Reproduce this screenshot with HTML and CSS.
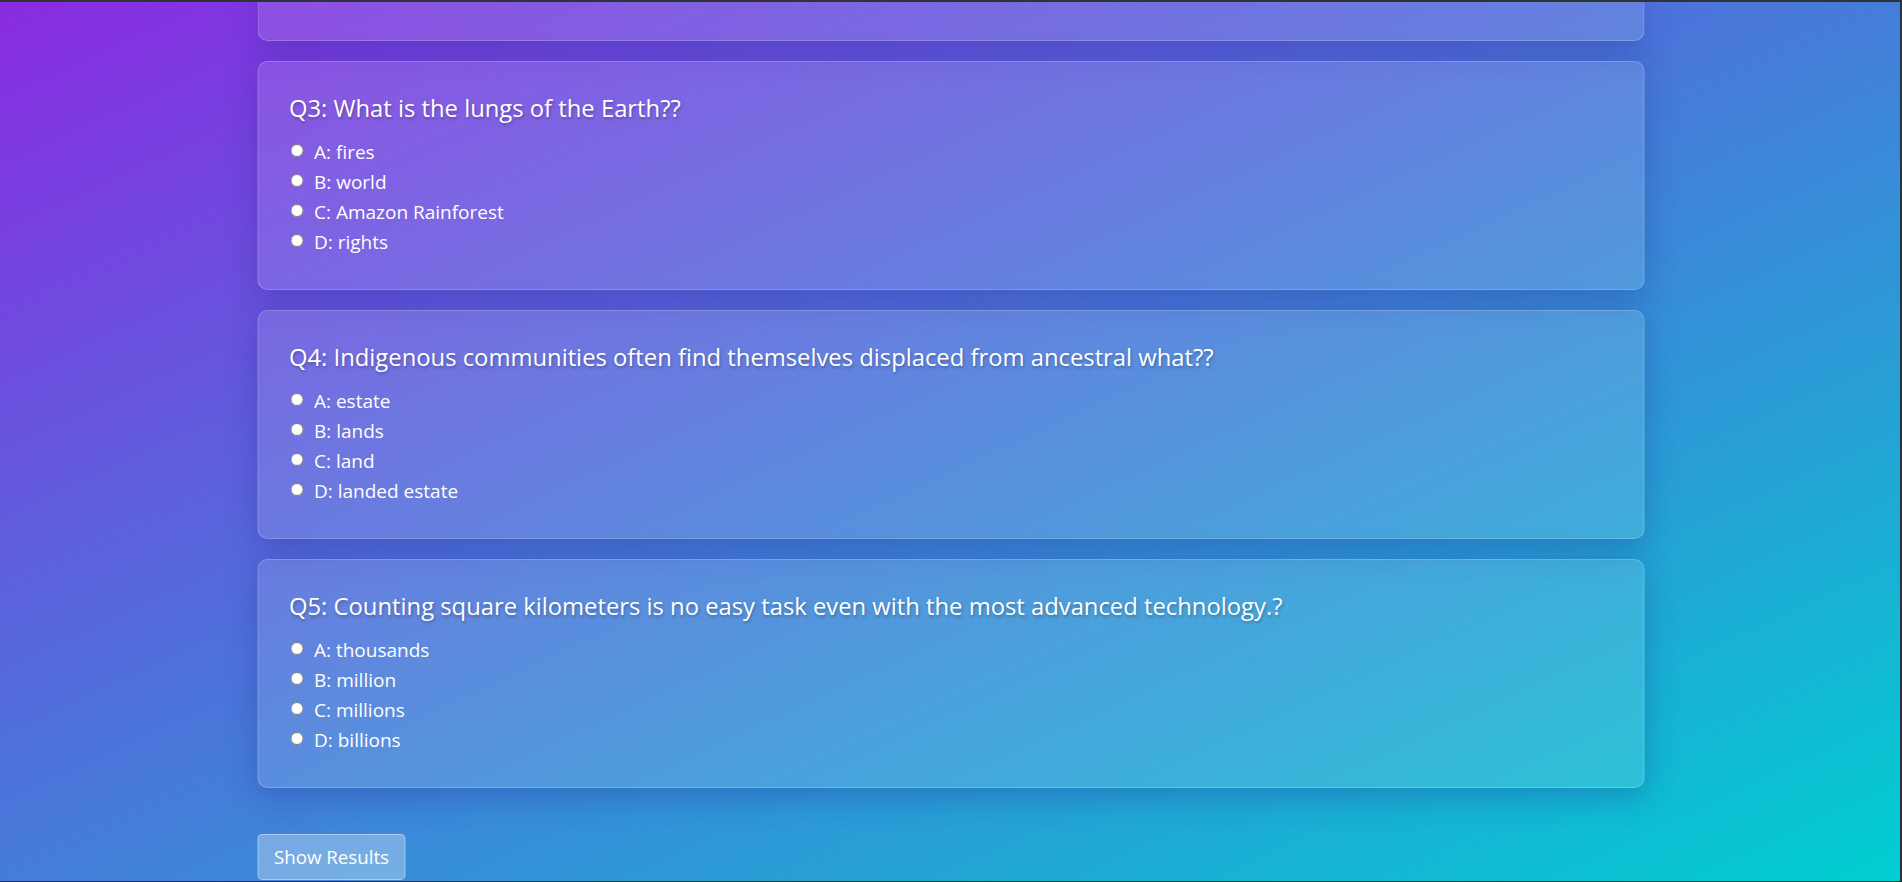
FILE: index.html
```html
<!DOCTYPE html>
<html lang="en">
<head>
<meta charset="utf-8">
<title>Quiz</title>
<link rel="stylesheet" href="styles.css">
</head>
<body>
<div class="viewport">
  <div class="quiz">
    <div class="card card-stub"></div>

    <div class="card">
      <h3 class="question">Q3: What is the lungs of the Earth??</h3>
      <label class="option"><input type="radio" name="q3"><span>A: fires</span></label>
      <label class="option"><input type="radio" name="q3"><span>B: world</span></label>
      <label class="option"><input type="radio" name="q3"><span>C: Amazon Rainforest</span></label>
      <label class="option"><input type="radio" name="q3"><span>D: rights</span></label>
    </div>

    <div class="card">
      <h3 class="question">Q4: Indigenous communities often find themselves displaced from ancestral what??</h3>
      <label class="option"><input type="radio" name="q4"><span>A: estate</span></label>
      <label class="option"><input type="radio" name="q4"><span>B: lands</span></label>
      <label class="option"><input type="radio" name="q4"><span>C: land</span></label>
      <label class="option"><input type="radio" name="q4"><span>D: landed estate</span></label>
    </div>

    <div class="card">
      <h3 class="question">Q5: Counting square kilometers is no easy task even with the most advanced technology.?</h3>
      <label class="option"><input type="radio" name="q5"><span>A: thousands</span></label>
      <label class="option"><input type="radio" name="q5"><span>B: million</span></label>
      <label class="option"><input type="radio" name="q5"><span>C: millions</span></label>
      <label class="option"><input type="radio" name="q5"><span>D: billions</span></label>
    </div>

    <button class="results-btn" type="button">Show Results</button>
  </div>
</div>
</body>
</html>
```

FILE: styles.css
```css
html {
  background: #2e3336;
}

body {
  margin: 0;
  font-family: "Segoe UI", "Open Sans", "Noto Sans", sans-serif;
  color: #ffffff;
}

.viewport {
  height: 879px;
  margin: 2px 2px 0 0;
  overflow: hidden;
  background: linear-gradient(to bottom right, #8a2be2 0%, #00ced1 100%);
}

.quiz {
  width: 1387px;
  margin: 0 auto;
  transform: translateX(0.5px);
}

.card {
  box-sizing: border-box;
  background: rgba(255, 255, 255, 0.12);
  border: 1px solid rgba(255, 255, 255, 0.2);
  border-radius: 10px;
  box-shadow: 0 8px 32px 0 rgba(31, 38, 135, 0.3);
  padding: 30px 31px 32px;
  margin-bottom: 20px;
}

.card-stub {
  height: 39px;
  padding: 0;
  border-top: none;
  border-radius: 0 0 10px 10px;
}

.question {
  margin: 0 0 13px;
  font-size: 23.8px;
  line-height: 32px;
  font-weight: 400;
  text-shadow: 1px 2px 3px rgba(0, 0, 0, 0.25);
}

.option {
  display: flex;
  align-items: center;
  height: 30px;
  font-size: 19px;
  line-height: 30px;
}

.option input {
  width: 13px;
  height: 13px;
  margin: 0 11px 3px 1px;
  flex: none;
}

.results-btn {
  display: block;
  margin-top: 46px;
  padding: 10px 16px;
  font-family: inherit;
  font-size: 18.7px;
  line-height: 24px;
  color: #ffffff;
  background: rgba(255, 255, 255, 0.3);
  border: 1px solid rgba(255, 255, 255, 0.4);
  border-radius: 5px;
}
```
